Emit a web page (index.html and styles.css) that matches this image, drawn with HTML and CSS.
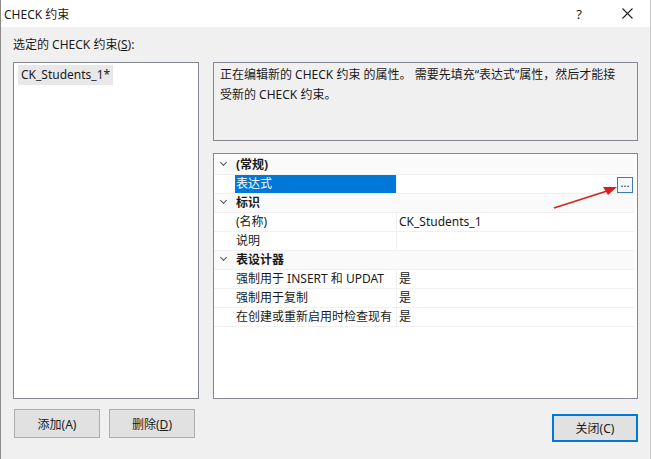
FILE: index.html
```html
<!DOCTYPE html>
<html lang="zh-CN">
<head>
  <meta charset="UTF-8" />
  <title>CHECK 约束</title>
  <link rel="stylesheet" href="styles.css">
</head>
<body>
  <div class="window">
    <div class="titlebar">
      <span class="title">CHECK 约束</span>
      <span class="help">?</span>
      <span class="close-x">
        <svg width="11" height="11" viewBox="0 0 11 11"><path d="M0.5 0.5 L10.5 10.5 M10.5 0.5 L0.5 10.5" stroke="#222" stroke-width="1.1" fill="none"/></svg>
      </span>
    </div>

    <div class="content">
      <div class="caption">选定的 CHECK 约束(<u>S</u>):</div>

      <div class="main">
        <div class="list">
          <div class="list-item">CK_Students_1*</div>
        </div>

        <div class="side">
          <div class="desc">正在编辑新的 CHECK 约束 的属性。 需要先填充“表达式”属性，然后才能接<br>受新的 CHECK 约束。</div>

          <div class="grid">
            <div class="row cat"><span class="chev"></span><span class="label">(常规)</span></div>
            <div class="row">
              <span class="gutter"></span>
              <span class="label selected">表达式</span>
              <span class="value button-cell"><span class="dots">...</span></span>
            </div>
            <div class="row cat"><span class="chev"></span><span class="label">标识</span></div>
            <div class="row"><span class="gutter"></span><span class="label">(名称)</span><span class="value">CK_Students_1</span></div>
            <div class="row"><span class="gutter"></span><span class="label">说明</span><span class="value"></span></div>
            <div class="row cat"><span class="chev"></span><span class="label">表设计器</span></div>
            <div class="row"><span class="gutter"></span><span class="label">强制用于 INSERT 和 UPDAT</span><span class="value">是</span></div>
            <div class="row"><span class="gutter"></span><span class="label">强制用于复制</span><span class="value">是</span></div>
            <div class="row"><span class="gutter"></span><span class="label">在创建或重新启用时检查现有</span><span class="value">是</span></div>
          </div>
        </div>
      </div>

      <div class="footer">
        <button class="btn">添加(A)</button>
        <button class="btn">删除(<u>D</u>)</button>
        <span class="spacer"></span>
        <button class="btn default">关闭(C)</button>
      </div>
    </div>

    <!-- red annotation arrow -->
    <svg class="arrow" width="80" height="40" viewBox="0 0 80 40">
      <path d="M3 32 L56 15" stroke="#d62020" stroke-width="1.6" fill="none"/>
      <path d="M66 11 L52 11 L57 19 Z" fill="#d62020"/>
    </svg>
  </div>
</body>
</html>
```

FILE: styles.css
```css
* {
  box-sizing: border-box;
  margin: 0;
  padding: 0;
}

body {
  width: 651px;
  height: 459px;
  overflow: hidden;
  font-family: "Noto Sans", "Noto Sans CJK SC", sans-serif;
  font-size: 12px;
  color: #1a1a1a;
  background: #f0f0f0;
}

.window {
  position: relative;
  width: 651px;
  height: 459px;
  border-left: 1px solid #8a8a8a;
  border-right: 1px solid #c8c8c8;
  display: flex;
  flex-direction: column;
}

.titlebar {
  height: 27px;
  background: white;
  display: flex;
  align-items: center;
  padding-left: 3px;
}

.title {
  flex: 1;
}

.help {
  width: 50px;
  text-align: center;
  font-size: 13px;
}

.close-x {
  width: 46px;
  display: flex;
  justify-content: center;
  padding-left: 1px;
}

.content {
  flex: 1;
  padding: 9px 12px 0 12px;
  display: flex;
  flex-direction: column;
}

.caption {
  height: 17px;
  line-height: 17px;
  margin-bottom: 9px;
}

.main {
  display: flex;
  gap: 14px;
  height: 337px;
}

.list {
  width: 186px;
  background: white;
  border: 1px solid #828790;
  padding: 2px 4px;
}

.list-item {
  display: inline-block;
  background: #e8e8e8;
  padding: 0 3px;
  height: 20px;
  line-height: 20px;
}

.side {
  width: 425px;
  display: flex;
  flex-direction: column;
  gap: 12px;
}

.desc {
  height: 79px;
  border: 1px solid #828790;
  background: #f0f0f0;
  padding: 2px 6px;
  line-height: 20px;
}

.grid {
  flex: 1;
  background: white;
  border: 1px solid #828790;
  padding: 2px 3px 0 0;
}

.row {
  display: flex;
  height: 19px;
  align-items: stretch;
  border-bottom: 1px solid #f0f0f0;
}

.row.cat {
  font-weight: bold;
  background: #fafafa;
}

.chev,
.gutter {
  width: 21px;
  flex: none;
  position: relative;
}

.chev::after {
  content: "";
  position: absolute;
  left: 7px;
  top: 4px;
  width: 4px;
  height: 4px;
  border-right: 1.3px solid #555;
  border-bottom: 1.3px solid #555;
  transform: rotate(45deg);
}

.label {
  width: 161px;
  flex: none;
  padding-left: 1px;
  line-height: 18px;
  white-space: nowrap;
  overflow: hidden;
}

.row.cat .label {
  width: auto;
}

.label.selected {
  background: #0078d7;
  color: white;
}

.value {
  flex: 1;
  padding-left: 2px;
  line-height: 18px;
  border-left: 1px solid #f0f0f0;
}

.button-cell {
  display: flex;
  justify-content: flex-end;
  align-items: center;
}

.dots {
  width: 16px;
  height: 16px;
  border: 1px solid #3d7bad;
  background: #f4f8fc;
  font-size: 11px;
  line-height: 10px;
  text-align: center;
  margin-top: 2px;
  margin-right: 1px;
}

.footer {
  display: flex;
  align-items: flex-start;
  gap: 9px;
  padding-top: 10px;
  padding-left: 1px;
}

.spacer {
  flex: 1;
}

.btn {
  width: 86px;
  height: 29px;
  font-family: inherit;
  font-size: 12px;
  color: #1a1a1a;
  background: #e1e1e1;
  border: 1px solid #adadad;
}

.btn.default {
  margin-top: 5px;
  height: 28px;
  border: 2px solid #0078d7;
}

.arrow {
  position: absolute;
  left: 550px;
  top: 176px;
}
```
